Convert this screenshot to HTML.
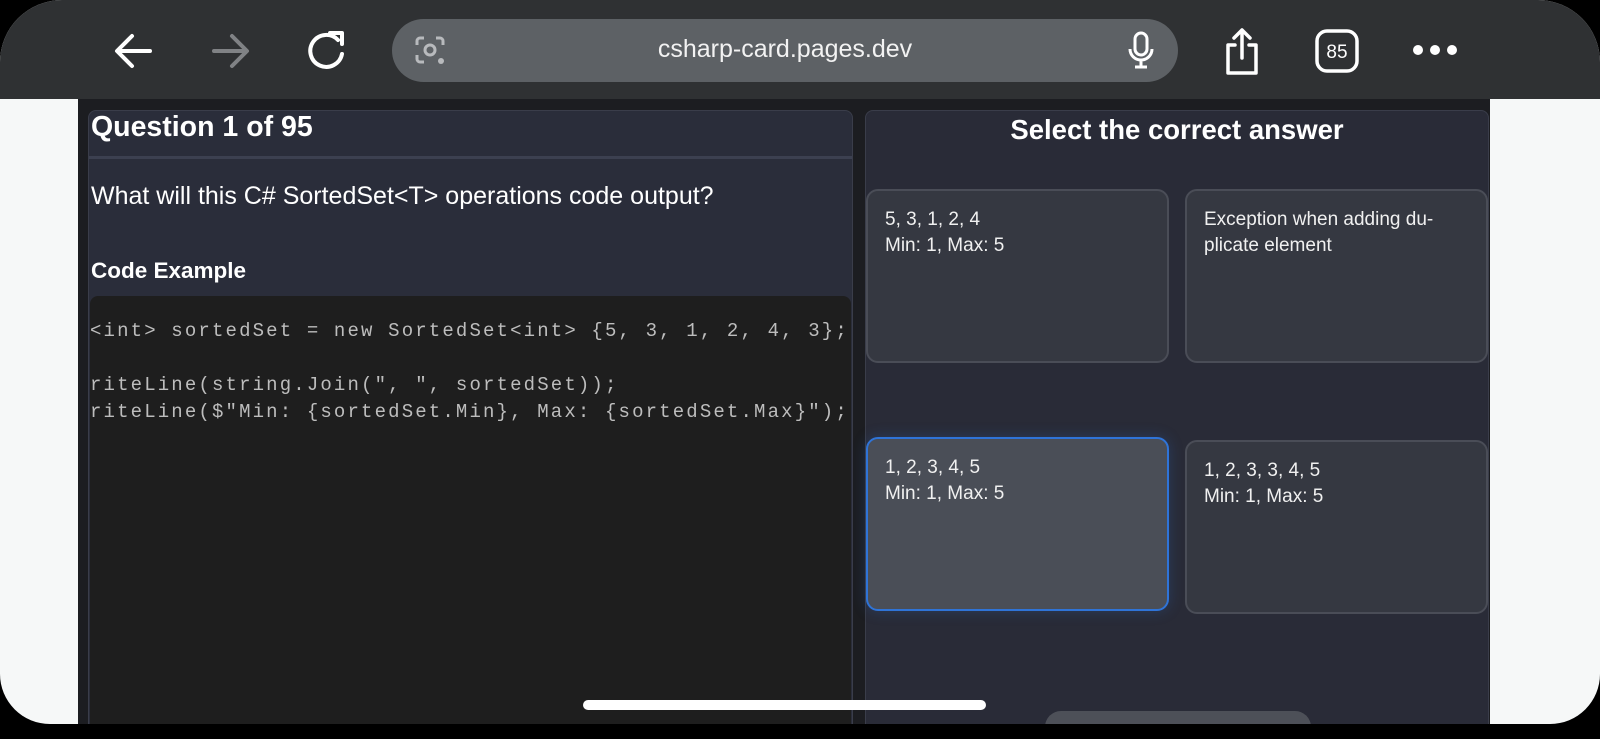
<!DOCTYPE html>
<html><head><meta charset="utf-8"><style>
*{margin:0;padding:0;box-sizing:border-box}
body{width:1600px;height:739px;background:#000;overflow:hidden;font-family:"Liberation Sans",sans-serif;position:relative}
.screen{position:absolute;left:0;top:0;width:1600px;height:724px;border-radius:62px 62px 50px 50px;overflow:hidden;background:#f6f8f8}
.bar{position:absolute;left:0;top:0;width:1600px;height:99px;background:#2f3133}
.url{position:absolute;left:392px;top:19px;width:786px;height:63px;border-radius:32px;background:#5d6165;color:#f2f2f2;font-size:25px;text-align:center;line-height:60px}
.content{position:absolute;left:78px;top:99px;width:1412px;height:640px;background:#1c1d21}
.lcard{position:absolute;left:88px;top:110px;width:765px;height:640px;background:#2a2d3a;border:1px solid #3a3d4a;border-radius:8px}
.rcard{position:absolute;left:865px;top:110px;width:624px;height:640px;background:#292b37;border:1px solid #3a3d4a;border-radius:8px}
.t1{position:absolute;left:91px;top:111px;color:#fff;font-size:28.5px;font-weight:bold}
.div{position:absolute;left:89px;top:156px;width:763px;height:3px;background:#3c4050}
.q{position:absolute;left:91px;top:182px;color:#fff;font-size:25px}
.ce{position:absolute;left:91px;top:258px;color:#fff;font-size:22.5px;font-weight:bold}
.code{position:absolute;left:90px;top:296px;width:761px;height:440px;background:#1e1e1e;border-radius:8px;overflow:hidden}
.code pre{position:absolute;left:0;top:22px;font-family:"Liberation Mono",monospace;font-size:19px;letter-spacing:2.15px;line-height:27px;color:#bdbdbd;white-space:pre}
.h2{position:absolute;left:865px;width:624px;top:114px;text-align:center;color:#fff;font-size:27.5px;font-weight:bold}
.opt{position:absolute;width:303px;height:174px;background:#353841;border:2px solid #4a4d57;border-radius:12px;color:#f0f0f0;font-size:19px;line-height:26px;padding:16px 17px}
.sel{background:#4a4e57;border-color:#2f74d8;box-shadow:0 0 14px rgba(47,116,216,.25)}
.home{position:absolute;left:583px;top:700px;width:403px;height:10px;border-radius:5px;background:#fff}
.btn{position:absolute;left:1045px;top:711px;width:266px;height:40px;border-radius:16px;background:#4d5058}
svg{position:absolute}
</style></head><body>
<div class="screen">
<div class="bar"></div>
<svg style="left:110px;top:28px" width="46" height="46" viewBox="0 0 46 46"><path d="M40 23H8M22 8L7 23l15 15" stroke="#fff" stroke-width="4" fill="none" stroke-linecap="round" stroke-linejoin="round"/></svg>
<svg style="left:208px;top:28px" width="46" height="46" viewBox="0 0 46 46"><path d="M6 23h32M24 8l15 15-15 15" stroke="#808285" stroke-width="4" fill="none" stroke-linecap="round" stroke-linejoin="round"/></svg>
<svg style="left:302px;top:26px" width="50" height="50" viewBox="0 0 50 50"><path d="M36 14A16 16 0 1 0 40 28" stroke="#fff" stroke-width="4" fill="none" stroke-linecap="round"/><path d="M28 7h12v11" stroke="#fff" stroke-width="4" fill="none" stroke-linecap="round" stroke-linejoin="round"/></svg>
<div class="url">csharp-card.pages.dev</div>
<svg style="left:413px;top:33px" width="34" height="34" viewBox="0 0 34 34"><path d="M4 12V8a3 3 0 0 1 3-3h4M30 12V8a3 3 0 0 0-3-3h-4M4 22v4a3 3 0 0 0 3 3h4" stroke="#b8babd" stroke-width="3" fill="none"/><circle cx="17" cy="17" r="5" stroke="#b8babd" stroke-width="3" fill="none"/><circle cx="28" cy="28" r="3" fill="#b8babd"/></svg>
<svg style="left:1126px;top:30px" width="30" height="40" viewBox="0 0 30 40"><rect x="9" y="3" width="12" height="22" rx="6" stroke="#fff" stroke-width="3" fill="none"/><path d="M4 19a11 11 0 0 0 22 0M15 30v6M9 37h12" stroke="#fff" stroke-width="3" fill="none"/></svg>
<svg style="left:1220px;top:26px" width="44" height="52" viewBox="0 0 44 52"><path d="M15 19H8v28h28V19h-7M22 4v28M14 12l8-8 8 8" stroke="#fff" stroke-width="3.5" fill="none" stroke-linecap="round" stroke-linejoin="round"/></svg>
<svg style="left:1313px;top:27px" width="48" height="48" viewBox="0 0 48 48"><rect x="4" y="4" width="40" height="40" rx="10" stroke="#fff" stroke-width="3.5" fill="none"/><text x="24" y="31" fill="#fff" font-size="19" font-family="Liberation Sans" text-anchor="middle">85</text></svg>
<svg style="left:1410px;top:40px" width="50" height="20" viewBox="0 0 50 20"><circle cx="8" cy="10" r="5" fill="#fff"/><circle cx="25" cy="10" r="5" fill="#fff"/><circle cx="42" cy="10" r="5" fill="#fff"/></svg>
<div class="content"></div>
<div class="lcard"></div>
<div class="rcard"></div>
<div class="t1">Question 1 of 95</div>
<div class="div"></div>
<div class="q">What will this C# SortedSet&lt;T&gt; operations code output?</div>
<div class="ce">Code Example</div>
<div class="code"><pre>&lt;int&gt; sortedSet = new SortedSet&lt;int&gt; {5, 3, 1, 2, 4, 3};

riteLine(string.Join(", ", sortedSet));
riteLine($"Min: {sortedSet.Min}, Max: {sortedSet.Max}");</pre></div>
<div class="h2">Select the correct answer</div>
<div class="opt" style="left:866px;top:189px">5, 3, 1, 2, 4<br>Min: 1, Max: 5</div>
<div class="opt" style="left:1185px;top:189px">Exception when adding du-<br>plicate element</div>
<div class="opt sel" style="left:866px;top:437px">1, 2, 3, 4, 5<br>Min: 1, Max: 5</div>
<div class="opt" style="left:1185px;top:440px">1, 2, 3, 3, 4, 5<br>Min: 1, Max: 5</div>
<div class="btn"></div>
<div class="home"></div>
</div>
</body></html>
